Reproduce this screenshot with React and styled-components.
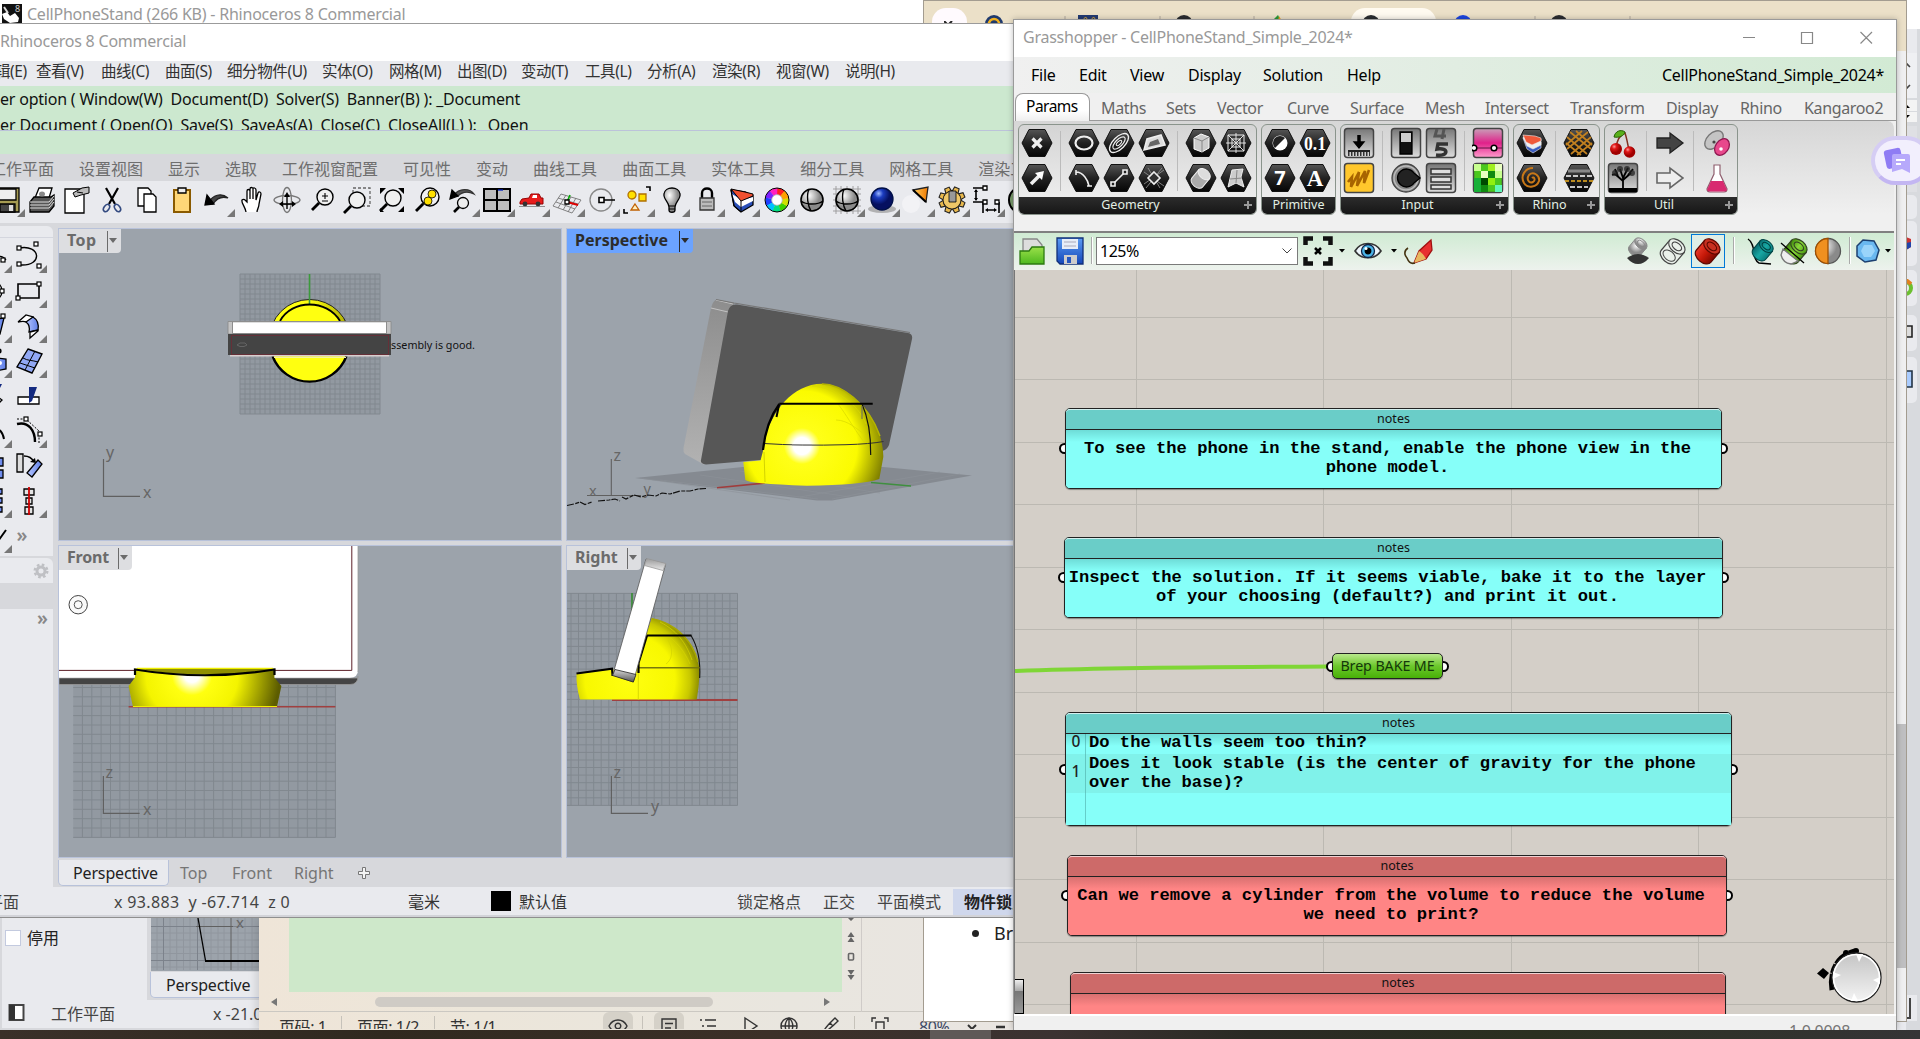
import React from "react";
import styled, { createGlobalStyle, css } from "styled-components";

const UI = `"Noto Sans", "Noto Sans CJK SC", sans-serif`;
const MONO = `"Courier New", "Liberation Mono", monospace`;

const Global = createGlobalStyle`
  html, body { margin: 0; padding: 0; }
  body { width: 1920px; height: 1039px; overflow: hidden; font-family: ${UI}; font-size: 15px; color: #222; }
  *, *::before, *::after { box-sizing: border-box; }
  svg { display: block; flex: none; }
  svg text { font-family: ${UI}; }
`;

const Desktop = styled.div`
  position: relative;
  width: 1920px;
  height: 1039px;
  overflow: hidden;
  background: #d7d8dc;
`;

const Win = styled.section`
  position: absolute;
  left: ${(p) => p.$x}px;
  top: ${(p) => p.$y}px;
  width: ${(p) => p.$w}px;
  height: ${(p) => p.$h}px;
  overflow: hidden;
  display: flex;
  flex-direction: column;
  background: ${(p) => p.$bg || "#e9eaee"};
`;

const Label = styled.span`
  display: block;
  flex: none;
  width: ${(p) => (p.$w ? p.$w + "px" : "auto")};
  font-size: ${(p) => p.$size || 16}px;
  font-weight: ${(p) => p.$weight || 400};
  letter-spacing: ${(p) => p.$ls || 0}px;
  color: ${(p) => p.$color || "#222"};
  line-height: 22px;
  white-space: pre;
`;

/* ---------- shared gradients ---------- */
const Lin = ({ id, a, b, c, h }) => (
  <linearGradient id={id} x1="0" y1="0" x2={h ? 1 : 0} y2={h ? 0 : 1}>
    <stop offset="0" stopColor={a} />
    {c && <stop offset=".5" stopColor={c} />}
    <stop offset="1" stopColor={b} />
  </linearGradient>
);
const HiddenDefs = styled.svg`position: absolute; width: 0; height: 0;`;
const Defs = () => (
  <HiddenDefs>
    <defs>
      <Lin id="hex" a="#555" c="#222" b="#050505" />
      <Lin id="btn" a="#777" c="#aaa" b="#ddd" />
      <Lin id="side" a="#8d8d8d" b="#b2b2b2" />
      <Lin id="cap" a="#9a9a9a" b="#e8e8e8" />
      <Lin id="capd" a="#d8d8d8" b="#555" />
      <Lin id="pink" a="#c8a0b8" c="#e0218a" b="#ff9ccc" />
      <Lin id="blueface" a="#b8c8ff" b="#5f7fe8" h />
      <Lin id="compass" a="#c4c4c4" b="#f4f4f4" />
      <Lin id="folder" a="#9ae04a" b="#4eb81e" />
      <Lin id="cyl" a="#e83828" c="#c41808" b="#7c0800" h />
      <Lin id="teal" a="#0a6c70" c="#18a8a4" b="#0a7c7c" h />
      <Lin id="green" a="#3f8a0a" c="#8ad83a" b="#4a9a10" h />
      <Lin id="cone" a="#ffd060" b="#f07800" h />
      <Lin id="floppy" a="#5a9cf4" b="#1447b8" />
      <radialGradient id="ball" cx=".35" cy=".3"><stop offset="0" stopColor="#fff" /><stop offset="1" stopColor="#8a8a8a" /></radialGradient>
      <radialGradient id="blue" cx=".35" cy=".25"><stop offset="0" stopColor="#9db8ff" /><stop offset=".4" stopColor="#1b3cc0" /><stop offset="1" stopColor="#051060" /></radialGradient>
      <radialGradient id="cherry" cx=".35" cy=".3"><stop offset="0" stopColor="#ff9a9a" /><stop offset=".4" stopColor="#e01818" /><stop offset="1" stopColor="#a00000" /></radialGradient>
      <radialGradient id="domeP" gradientUnits="userSpaceOnUse" cx="802" cy="446" r="95">
        <stop offset="0" stopColor="#fff" /><stop offset=".09" stopColor="#fff" /><stop offset=".19" stopColor="#ffff18" /><stop offset=".58" stopColor="#fbfb00" /><stop offset=".87" stopColor="#808000" />
      </radialGradient>
      <radialGradient id="domeF" gradientUnits="userSpaceOnUse" cx="192" cy="675" r="92">
        <stop offset="0" stopColor="#fff" /><stop offset=".08" stopColor="#fff" /><stop offset=".22" stopColor="#ffff10" /><stop offset=".5" stopColor="#f4f400" /><stop offset=".95" stopColor="#5c5c00" />
      </radialGradient>
      <radialGradient id="domeR" gradientUnits="userSpaceOnUse" cx="630" cy="680" r="75">
        <stop offset="0" stopColor="#ffff10" /><stop offset=".6" stopColor="#f8f800" /><stop offset=".8" stopColor="#c8c800" /><stop offset=".98" stopColor="#747400" />
      </radialGradient>
      <Lin id="topBall" a="#ffff10" c="#ffff10" b="#a8a800" h />
    </defs>
  </HiddenDefs>
);

const I = ({ s = 32, children }) => (
  <svg width={s} height={s} viewBox={`${-s / 2} ${-s / 2} ${s} ${s}`} fill="none" stroke="#000" strokeWidth="1.3">{children}</svg>
);

/* ---------- Rhino toolbar icons ---------- */
const Lens = ({ x = 3, y = -3, r = 8 }) => (
  <>
    <circle cx={x} cy={y} r={r} fill="#f0f0f0" strokeWidth="1.4" />
    <path d={`M${x - r * 0.75} ${y + r * 0.75}L${x - r - 5} ${y + r + 5}`} strokeWidth="2.8" />
  </>
);
const rhinoIcons = [
  <I key="0"><path d="M-13 -12H12V12H-10L-13 9Z" fill="#a59b52" /><path d="M-9 -11H9V0H-9Z" fill="#eee" /><path d="M-7 4H8V12H-7Z" fill="#444" /><path d="M2 5H6V11H2Z" fill="#ddd" stroke="none" /></I>,
  <I key="1"><path d="M-7 -2L-3 -12H10L7 -2Z" fill="#fff" /><path d="M-12 2L-8 -3H9L12 -5V6L7 12H-12Z" fill="#555" /><path d="M-12 2H7L12 -4M-12 5H7L12 -1M-12 8H7L12 2" stroke="#ddd" strokeWidth="1" /><ellipse cx="0" cy="-6" rx="3" ry="2.5" fill="#888" stroke="none" /></I>,
  <I key="2"><path d="M-12 -11H7V13H-12Z" fill="#fff" /><path d="M-4 -7L5 -12L12 -13V-7L4 -5L-2 -3Z" fill="#bbb" strokeWidth="1" /><path d="M0 -8L6 -7" strokeWidth="1" /></I>,
  <I key="3"><path d="M-6 -12L3 4M6 -12L-3 4" strokeWidth="2.2" /><ellipse cx="-5.5" cy="8" rx="2.5" ry="4" transform="rotate(35 -5.5 8)" stroke="#334a80" strokeWidth="1.6" /><ellipse cx="5.5" cy="8" rx="2.5" ry="4" transform="rotate(-35 5.5 8)" stroke="#334a80" strokeWidth="1.6" /></I>,
  <I key="4"><path d="M-9 -12H1L4 -9V6H-9Z" fill="#fff" /><path d="M-3 -6H6L9 -3V12H-3Z" fill="#fff" /></I>,
  <I key="5"><path d="M-8 -10H8V12H-8Z" fill="#ffd778" stroke="#8a5a00" strokeWidth="2" /><path d="M-4 -12H4V-7H-4Z" fill="#eee" /></I>,
  <I key="6"><path d="M-9 3C-4 -5 4 -8 11 -2C5 -4 0 -2 -4 4Z" fill="#444" stroke="#222" /><path d="M-12 5L-10 -5L-3 4Z" fill="#000" /></I>,
  <I key="7"><path d="M-6 12C-7 6 -11 3 -10 0C-8 -2 -6 1 -5 2V-9C-5 -11 -2 -11 -2 -9V-1V-11C-2 -13 1 -13 1 -11V-1V-11C1 -13 4 -12 4 -10V0L6 -7C7 -9 9 -8 9 -6L7 4C7 8 5 9 5 12" fill="#fff" /></I>,
  <I key="8"><ellipse rx="13" ry="4.5" stroke="#777" /><ellipse rx="4.5" ry="12.5" stroke="#777" /><path d="M0 -6V9M-5 4H6" strokeWidth="1.4" /><path d="M0 -8L-3 -3H3ZM-8 4L-4 1V7ZM9 4L5 1V7Z" fill="#000" stroke="none" /></I>,
  <I key="9"><Lens /><path d="M3 -7V-1M0 -4H6M0 1H6" strokeWidth="1.1" /></I>,
  <I key="10"><path d="M-4 -12H13V6H-4Z" strokeDasharray="3 2" stroke="#666" /><Lens x={0} y={0} /></I>,
  <I key="11"><Lens x={1} y={-2} /><path d="M-12 -12H-6L-12 -6ZM12 -12V-6L6 -12ZM12 12H6L12 6ZM-12 12V8L-8 12Z" fill="#000" stroke="none" /></I>,
  <I key="12"><Lens r={9} /><circle cx="5" cy="-6" r="4" fill="#ffe000" strokeWidth=".8" /><circle cx="1" cy="1" r="4" fill="#ffe000" strokeWidth=".8" /></I>,
  <I key="13"><path d="M-8 -5C-3 -12 8 -12 12 -6C6 -9 0 -8 -4 -4Z" fill="#555" stroke="#333" /><path d="M-12 -1L-10 -10L-4 -4Z" fill="#000" /><circle cx="1" cy="3" r="5.5" fill="#eee" /><path d="M-3 7L-8 12" strokeWidth="2.6" /></I>,
  <I key="14"><path d="M-13 -11H13V11H-13Z" fill="#bdbdbd" strokeWidth="2" /><path d="M0 -11V11M-13 0H13" strokeWidth="2" /><path d="M1 -10H6" stroke="#0020c0" /></I>,
  <I key="15"><path d="M-12 2L-10 -1L-3 -2L-1 -6H7L9 -2H11V4H-12Z" fill="#e81c1c" stroke="#900" strokeWidth="1" /><path d="M1 -5H5V-2H0Z" fill="#fff" stroke="none" /><circle cx="-7" cy="4" r="2.4" fill="#333" stroke="none" /><circle cx="6" cy="4" r="2.4" fill="#333" stroke="none" /><path d="M-13 6.5H13" stroke="#777" strokeWidth=".8" /></I>,
  <I key="16"><path d="M-6 -6L14 0L5 13L-14 6ZM-1 -5L-9 8M4 -3L-4 10M9 -2L1 12M-9 -2L11 4M-11 2L8 9" stroke="#777" strokeWidth=".9" /><path d="M0 2L3 -5" stroke="#0a0" strokeWidth="1.6" /><path d="M0 2L11 5" stroke="#d00" strokeWidth="2" /><path d="M-2 0H2V4H-2Z" fill="#fff" /></I>,
  <I key="17"><circle cx="-1" r="11" stroke="#888" /><path d="M-3 -2.5H2V2.5H-3ZM2 0H13" fill="#fff" strokeWidth="1.6" /></I>,
  <I key="18"><circle cx="-5" cy="-5" r="4" fill="#ffe000" stroke="#b07000" /><path d="M2 -6H9V1H2Z" fill="#ffe000" stroke="#b07000" /><path d="M-2 4L2 10H-6Z" fill="#fff0c0" stroke="#c06000" /><path d="M9 -13H13V-9M-13 9V13H-9" strokeWidth="1.6" /></I>,
  <I key="19"><path d="M-3 7C-3 2 -9 -1 -8 -6C-7 -14 7 -14 8 -6C9 -1 3 2 3 7V10C3 13 -3 13 -3 10Z" fill="url(#ball)" /><path d="M-3 6H3M-3 9H3" strokeWidth="1" /></I>,
  <I key="20"><path d="M-5 -2V-7C-5 -13 5 -13 5 -7V-2" strokeWidth="2.4" /><path d="M-7 -2H7V10H-7Z" fill="#bbb" stroke="#333" /><path d="M-5 2H5M-5 6H5" stroke="#666" strokeWidth="1" /></I>,
  <I key="21"><path d="M-11 -10L-8 6L-1 12L11 5V-4L3 -8Z" fill="#2a4fb8" /><path d="M-10 -6L-7 2L-1 7L11 1V-3L0 0Z" fill="#fff" stroke="none" /><path d="M-11 -11L-1 1L11 -4V-6L3 -8Z" fill="#f05030" strokeWidth="1" /><path d="M-11 -10L-8 6L-1 12V1" strokeWidth="1" /></I>,
  <I key="22"><g strokeWidth="6.5">{["#ff2020", "#ff20c0", "#8020ff", "#2040ff", "#00c0ff", "#00e080", "#40d000", "#d0e000", "#ffa000"].map((c, i) => (<path key={c} stroke={c} d="M0 -8.7A8.7 8.7 0 0 1 5.8 -6.5" transform={`rotate(${-i * 40})`} />))}</g><circle r="12" strokeWidth="1" /><circle r="5.3" fill="#fff" stroke="#999" strokeWidth=".6" /></I>,
  <I key="23"><circle r="11" fill="url(#ball)" strokeWidth="1.6" /><path d="M-11 1C-6 5 6 5 11 1M-3 -11C-6 -4 -4 6 -1 11" strokeWidth="1.4" /></I>,
  <I key="24"><path d="M-14 -11H14M-14 -6H14M-14 0H14M-14 6H14M-14 11H14M-11 -14V14M-6 -14V14M0 -14V14M6 -14V14M11 -14V14" stroke="#999" strokeWidth=".9" /><circle r="11" fill="url(#ball)" strokeWidth="1.6" /><path d="M-11 1C-6 5 6 5 11 1M-3 -11C-6 -4 -4 6 -1 11" strokeWidth="1.4" /></I>,
  <I key="25"><ellipse cx="0" cy="9" rx="14" ry="4" fill="#999" opacity=".7" stroke="none" /><circle cy="-1" r="11" fill="url(#blue)" stroke="#001048" /></I>,
  <I key="26"><circle cx="-6" cy="4" r="9" fill="#f2f2f5" stroke="none" /><path d="M-4 -10L11 -13L9 2Z" fill="url(#cone)" stroke="#222" /><path d="M-4 -10L9 2" strokeWidth="2" /></I>,
  <I key="27"><g fill="#e8b84c" stroke="#222" strokeWidth="1.1">{[22, 67, 112, 157, 202, 247, 292, 337].map((a) => (<path key={a} d="M-3.2 -7.5L-2.4 -13H2.4L3.2 -7.5" transform={`rotate(${a})`} />))}<circle r="9" /></g><circle r="8.2" fill="#f0c868" stroke="none" /><path d="M-3 -9H4V2H-3Z" fill="#999" strokeWidth=".8" /></I>,
  <I key="28"><path d="M-14 -12H-4M-14 2H-4M-11 -10V0M-4 2V13M12 2V13M0 10H8" strokeWidth="1.6" /><path d="M-4 -14H0V-10H-4ZM-4 0H0V4H-4ZM8 0H12V4H8Z" fill="#fff" /><path d="M-11 -11L-13 -8H-9ZM-11 1L-13 -2H-9ZM-2 10L1 8V12ZM10 10L7 8V12Z" fill="#000" stroke="none" /></I>,
  <I key="29"><circle r="13" fill="#7a9c6c" strokeWidth="2" /><path d="M-9 -4H2M-9 0H2" stroke="#dfe" strokeWidth="3" /></I>,
];
const cornerMarked = new Set([0, 6, 13, 14, 15, 16, 17, 18, 19, 20, 21, 22, 24, 25, 26, 27, 28]);

const Sq = ({ x, y }) => <rect x={x - 2} y={y - 2} width="4" height="4" fill="#fff" strokeWidth="1.2" />;
const sideIcons = [
  [<I key="a"><path d="M-12 8C0 8 4 -6 12 4" /><Sq x={9} y={4} /></I>, <I key="b"><path d="M-10 -8C12 -12 14 10 -8 9" strokeWidth="1.4" /><Sq x={-10} y={-8} /><Sq x={7} y={-12} /><Sq x={-10} y={8} /><Sq x={10} y={10} /></I>],
  [<I key="a"><circle cx="-2" r="10" /><Sq x={8} y={0} /></I>, <I key="b"><path d="M-11 -7H10V7H-11Z" strokeWidth="1.6" /><Sq x={10} y={-7} /><Sq x={-11} y={7} /></I>],
  [<I key="a"><path d="M-8 8L-2 -6L10 -8L6 8Z" fill="url(#blueface)" /><Sq x={9} y={-10} /></I>, <I key="b"><path d="M-11 -4L-3 -11L4 -9L0 -3C-3 -5 -7 -5 -11 -4Z" fill="#fff" /><path d="M4 -9C9 -6 10 -2 9 4L0 6C1 2 1 -1 -3 -4Z" fill="url(#blueface)" /><path d="M9 4V5L1 12V6Z" fill="#fff" /></I>],
  [<I key="a"><path d="M-8 -4L12 -2V8L-8 12Z" fill="url(#blueface)" /><circle cx="6" cy="2" r="2" fill="#fff" stroke="none" /><circle cx="5" cy="-10" r="2" fill="#000" /></I>, <I key="b"><path d="M-1 -12L13 -7L3 12L-12 6Z" fill="#91a8f5" strokeWidth="1.4" /><path d="M-6 -3C-1 0 3 -1 9 1M-9 2L6 7M6 -10L-4 9" strokeWidth="1" /></I>],
  [<I key="a"><path d="M0 -2L8 4L0 12" /><path d="M2 -12H8L4 -4Z" fill="#142a80" stroke="none" /></I>, <I key="b"><path d="M-11 1H10V8H-11Z" fill="#fff" /><path d="M0 -9H8L3 5L0 7Z" fill="#142a80" stroke="none" /></I>],
  [<I key="a"><path d="M-8 6C0 -8 8 -2 10 8" strokeWidth="2" /></I>, <I key="b"><path d="M-12 -7C0 -10 6 0 6 11" strokeWidth="2.4" /><path d="M-12 -12H-4M-2 -11L10 0M10 3V12" strokeDasharray="2 1.5" strokeWidth="1" /><Sq x={-3} y={-12} /><Sq x={11} y={3} /></I>],
  [<I key="a"><path d="M-2 -8H9V0H-2ZM0 4H9V12H0Z" fill="url(#blueface)" /></I>, <I key="b"><path d="M-12 -12H-6V6H-12Z" fill="#ddd" /><path d="M-5 -10C0 -10 3 -8 5 -4" /><path d="M7 -3L1 -4L6 -8Z" fill="#000" stroke="none" /><path d="M9 -6L13 -2L3 11L-2 7Z" fill="url(#blueface)" /></I>],
  [<I key="a"><path d="M0 -12H8V-7H0ZM0 -3H8V2H0ZM0 6H8V11H0Z" fill="#6f8cf0" /></I>, <I key="b"><path d="M-5 -12H5V-6H-5ZM-3 -3H3V3H-3ZM-4 6H4V13H-4Z" fill="#e4e4e4" /><path d="M0 -14V14" stroke="#d00000" strokeWidth="1.8" /></I>],
];

/* ---------- Rhino window pieces ---------- */
const Bar = styled.div`
  display: flex;
  flex: none;
  align-items: ${(p) => p.$align || "center"};
  height: ${(p) => p.$h}px;
  padding: ${(p) => p.$pt || 0}px 0 ${(p) => p.$pb || 0}px;
  background: ${(p) => p.$bg || "transparent"};
  overflow: hidden;
  white-space: pre;
`;
const RhinoFrame = styled(Win)`
  border-top: 1px solid #9b9b9b;
  border-bottom: 1px solid #8f8f8f;
`;
const Shift = styled.div`
  display: flex;
  gap: ${(p) => p.$gap || 0}px;
  margin-left: ${(p) => p.$x}px;
`;
const CommandLog = styled.div`
  height: 45px;
  flex: none;
  overflow: hidden;
  background: #cce8cf;
  border-bottom: 1px solid #bcc3da;
  padding-top: 2px;
`;
const CommandLine = styled.div`
  height: 26px;
  line-height: 22px;
  font-size: 16px;
  letter-spacing: ${(p) => p.$ls}px;
  white-space: pre;
  color: #111;
`;
const CommandInput = styled.div`height: 23px; flex: none; background: #cce8cf;`;
const Slot = styled.div`
  position: relative;
  width: 35px;
  height: 35px;
  flex: none;
  display: flex;
  align-items: center;
  justify-content: center;
  ${(p) => p.$mark && css`
    &::after {
      content: "";
      position: absolute;
      right: 0;
      bottom: 0;
      border-left: 8px solid transparent;
      border-bottom: 8px solid #777;
    }
  `}
`;
const Work = styled.div`display: flex; flex: none; height: 664px; background: #d7d8dc;`;
const SideColumn = styled.div`width: 58px; flex: none; padding: 3px 5px 0 0; display: flex; flex-direction: column; overflow: hidden;`;
const SideBlock = styled.div`
  height: ${(p) => p.$h}px;
  flex: none;
  overflow: hidden;
  margin-bottom: ${(p) => p.$mb || 0}px;
  background: ${(p) => p.$bg || "#e9eaee"};
  border-radius: 0 ${(p) => p.$r || 0}px 0 0;
`;
const SideGrip = styled.div`height: 12px; border-bottom: 1px solid #d4d6de;`;
const More = styled.div`
  padding: ${(p) => p.$pad};
  text-align: right;
  color: #888;
  font-size: 19px;
  line-height: 18px;
  font-weight: 600;
`;
const GearRow = styled.div`display: flex; justify-content: flex-end; align-items: center; height: 100%; padding-right: 3px;`;
const ViewArea = styled.div`flex: 1; min-width: 0; padding-top: 5px; display: flex; flex-direction: column;`;
const ViewGrid = styled.div`
  display: grid;
  grid-template: 313px 313px / 504px 448px;
  gap: 4px;
  flex: none;
`;
const View = styled.div`
  position: relative;
  border: 1px solid #b8c2da;
  background: #9ca3ab;
  overflow: hidden;
`;
const ViewTag = styled.div`
  position: absolute;
  left: 0;
  top: 0;
  height: 24px;
  width: ${(p) => p.$w}px;
  padding: 0 0 0 8px;
  background: ${(p) => (p.$active ? "#6ba3ff" : "#dddee1")};
  color: ${(p) => (p.$active ? "#2c2c2c" : "#6b6b6b")};
  border-bottom-right-radius: 4px;
  font-weight: 700;
  font-size: 16px;
  line-height: 22px;
  letter-spacing: ${(p) => p.$ls || 0}px;
`;
const TagArrow = styled.i`
  position: absolute;
  right: 0;
  top: 2px;
  width: 14px;
  height: 21px;
  border-left: 1px solid currentColor;
  &::after {
    content: "";
    position: absolute;
    left: 1px;
    top: 7px;
    border: 4.5px solid transparent;
    border-top: 5px solid currentColor;
    border-bottom: 0;
  }
`;
const ViewTabs = styled.div`height: 29px; display: flex; align-items: flex-start; padding-top: 2px;`;
const ViewTab = styled.div`
  width: ${(p) => p.$w}px;
  height: 26px;
  padding-left: ${(p) => p.$pl || 0}px;
  line-height: 26px;
  font-size: 16px;
  letter-spacing: ${(p) => p.$ls || 0}px;
  color: ${(p) => (p.$on ? "#222" : "#757575")};
  white-space: nowrap;
  ${(p) => p.$on && css`
    background: #e9eaee;
    border: 1px solid #b8c2da;
    border-top: 0;
    border-radius: 0 0 5px 5px;
  `}
`;
const StatusBar = styled.div`
  height: 30px;
  flex: none;
  display: flex;
  align-items: center;
  padding-top: 2px;
  background: #e9eaee;
  border-bottom: 2px solid #d2d3d8;
  overflow: hidden;
`;
const Swatch = styled.i`width: 20px; height: 20px; margin: 0 8px 2px 0; background: #000; flex: none;`;
const SnapOn = styled.div`
  width: 80px;
  height: 26px;
  flex: none;
  padding-left: 11px;
  background: #cfd7ec;
  font-size: 16px;
  font-weight: 700;
  line-height: 26px;
  white-space: nowrap;
`;

const Grid = ({ x, y, w, h, step }) => {
  const lines = [];
  for (let i = x + w; i >= x - 0.01; i -= step) lines.push(`M${i.toFixed(1)} ${y}V${y + h}`);
  for (let j = y + h; j >= y - 0.01; j -= step) lines.push(`M${x} ${j.toFixed(1)}H${x + w}`);
  return (
    <>
      <rect x={x} y={y} width={w} height={h} fill="#9299a1" />
      <path d={lines.join("")} stroke="#81888f" strokeWidth="1" fill="none" />
    </>
  );
};
const Axis = ({ x, y, up, right, a, b, ax, ay, bx, by }) => (
  <>
    <path d={`M${x} ${up}V${y}H${right}`} stroke="#606060" fill="none" strokeWidth="1.2" />
    <text x={ax} y={ay} fontSize="16" fill="#666">{a}</text>
    <text x={bx} y={by} fontSize="16" fill="#666">{b}</text>
  </>
);

const TopScene = () => (
  <svg width="502" height="311" viewBox="59 229 502 311" fill="none">
    <Grid x={240} y={274} w={140} h={140} step={5} />
    <circle cx="309.7" cy="340" r="40.5" fill="url(#topBall)" stroke="#222" strokeWidth="1" />
    <path d="M309.5 274V304" stroke="#3c9a3c" strokeWidth="1.6" />
    <path d="M280 321C292 299 327 299 340 321" fill="#ffff10" stroke="#000" strokeWidth="1.8" />
    <path d="M272.5 356A39.5 39.5 0 0 0 346.5 356" fill="#ffff10" stroke="#000" strokeWidth="2.4" />
    <path d="M274 357.5H346" stroke="#f4f49a" />
    <path d="M228 321.5H391V334H228Z" fill="#c4c4c4" stroke="#888" strokeWidth=".8" />
    <path d="M232.5 321.8H386.5V333.5H232.5Z" fill="#fff" stroke="#777" strokeWidth=".8" />
    <path d="M230 355.5H389" stroke="#d8cfcf" strokeWidth="2" />
    <path d="M228 334H391V355H228Z" fill="#444" />
    <path d="M231.5 335.5H388.5V354.5H231.5Z" stroke="#7c2430" strokeWidth=".6" />
    <path d="M237 345L240 343H245L247 345L244 346.5H240Z" stroke="#6c6c6c" strokeWidth=".8" />
    <text x="391" y="349" fontSize="11.5" fill="#111" textLength="84" lengthAdjust="spacingAndGlyphs">ssembly is good.</text>
    <Axis x={103.5} y={496.3} up={459} right={140} a="y" b="x" ax={106} ay={458} bx={143} by={497.5} />
  </svg>
);
const PerspectiveScene = () => (
  <svg width="447" height="311" viewBox="567 229 447 311" fill="none">
    <path d="M635 478L743 467H883L972 475.5L832 500.5H817Z" fill="#858a91" />
    <path d="M660 480L818 499M700 475L850 497M740 471L880 493M790 500L640 478M832 499L960 474M800 497L940 472" stroke="#8d9299" strokeWidth=".6" />
    <path d="M711 308Q713 300 717 299.5L734 303L704 464.5L701 463L685 454Q683 452 683.5 448Z" fill="url(#side)" />
    <path d="M711 308L728 312M716 300L733 304" stroke="#cfcfcf" strokeWidth=".8" />
    <path d="M716 299.5L734 303L910 332.5" stroke="#777" strokeWidth="1.2" />
    <path d="M728 311Q730 303.5 737 304.5L908 333Q913 334 912 339L889 445Q887 450 882 451L760 460L706 464.5Q700 464 701 460Z" fill="#575757" />
    <path d="M717 487.8L765 483" stroke="#a03c3c" strokeWidth="1.6" />
    <path d="M871 482.5L911 486" stroke="#3f8f3f" strokeWidth="1.6" />
    <path d="M743.3 462L745.3 480Q750 484 806.7 485.7Q862 485 879.3 479L883.3 457C884 420 850 384 822 383.7C792 384 772 412 765 438L763 451L760.5 460.5Z" fill="url(#domeP)" />
    <path d="M822 384C840 384 868 402 880 436" stroke="#b4b400" strokeWidth="1.5" />
    <path d="M812 386C836 388 858 404 866 424M838 404C846 414 852 426 864 442M836 420C848 420 858 430 864 434" stroke="#d8d800" opacity=".7" />
    <path d="M764 443.5Q800 446 846 444.7Q870 444 883.5 441.5" stroke="#333" />
    <path d="M792 444.900H812" stroke="#999" />
    <path d="M779.3 403.8H872.7" stroke="#000" strokeWidth="2" />
    <path d="M779.3 404Q766 422 763 450" stroke="#000" strokeWidth="2.2" />
    <path d="M779 405L776.5 417" stroke="#000" strokeWidth="2" />
    <path d="M862 404Q871 424 870.7 455" stroke="#111" strokeWidth="1.2" />
    <path d="M862 406V419" stroke="#666" />
    <path d="M764 452L765 482" stroke="#c8c800" strokeWidth=".8" />
    <path d="M611.3 459V496M587 495.5H641" stroke="#606060" strokeWidth="1.1" />
    <text x="613.5" y="460.5" fontSize="16" fill="#666">z</text>
    <text x="589" y="496" fontSize="14.5" fill="#666">x</text>
    <text x="643.5" y="493.5" fontSize="14.5" fill="#666">y</text>
    <path d="M567 505.5L574 504L580 502L585 504.5L592 502M598 501L609 500L615 499L620 501M622 497L626 499L634 495L641 497L648 495L656 496L662 493L670 494L680 491L690 491L698 489L706 488.5" stroke="#111" strokeWidth="1.2" strokeDasharray="7 1.5 4 1" />
  </svg>
);
const FrontScene = () => (
  <svg width="502" height="311" viewBox="59 546 502 311" fill="none">
    <Grid x={73.2} y={678} w={262.2} h={159.4} step={9.37} />
    <path d="M59 678H358V676Q358 684.5 350 684.5H59Z" fill="#444" stroke="#999" strokeWidth=".8" />
    <path d="M59 546H358V670Q358 677.8 350 677.8H59Z" fill="#fff" />
    <path d="M358 546V672" stroke="#999" strokeWidth=".8" />
    <path d="M59 670.4H351.8V546" stroke="#5c2028" />
    <circle cx="78.2" cy="604.7" r="9.2" fill="#fafafa" stroke="#444" /><circle cx="78.2" cy="604.7" r="4" stroke="#555" />
    <path d="M128.6 706.8H335.4" stroke="#a04040" strokeWidth="1.6" />
    <path d="M135 668.5H275L274.3 677.5L281.4 686L277 706.7H132.9L128.6 686L135 677.5Z" fill="url(#domeF)" />
    <path d="M137 668.5H273Q205 681 137 668.5Z" fill="#8f8f00" />
    <path d="M137 668.3H273M133 706.5H277" stroke="#f0f000" strokeWidth="1.2" />
    <path d="M135 675V669.5Q205 681 274.5 669.5V675" stroke="#000" strokeWidth="2.2" />
    <Axis x={103.4} y={813.4} up={776} right={139.6} a="z" b="x" ax={105.5} ay={777.5} bx={143} by={814.5} />
  </svg>
);
const RightScene = () => (
  <svg width="447" height="311" viewBox="567 546 447 311" fill="none">
    <Grid x={563} y={593.4} w={174.5} h={212} step={7.57} />
    <path d="M632 593V630" stroke="#3f8f3f" strokeWidth="1.8" />
    <path d="M612 700H737.5" stroke="#a04040" strokeWidth="1.8" />
    <path d="M651.7 618.3Q678 624 691.7 646.7Q700 660 699.5 674Q699 688 696.7 699.5H580Q576 686 576.5 674L612.7 669L620 676L640 650Z" fill="url(#domeR)" />
    <path d="M651.7 618.8Q678 624 691.7 646.7Q696 654 698 662" stroke="#a8a800" strokeWidth="1.6" />
    <path d="M660 622C680 632 688 648 692 660M654 630C672 634 684 650 690 664M668 640C674 650 672 660 666 664" stroke="#d4d400" opacity=".7" />
    <path d="M576.5 673.5L612 668.7L612.5 676" stroke="#000" strokeWidth="2" />
    <path d="M646.5 635.5H691.5" stroke="#000" strokeWidth="2" />
    <path d="M691 635.5Q701 652 699.7 678" stroke="#111" strokeWidth="1.1" />
    <path d="M638 667.8H699.7" stroke="#77770c" strokeWidth="1.6" />
    <path d="M638.3 673V700" stroke="#d0d000" strokeWidth=".8" />
    <path d="M647 635.5L638.5 663V673" stroke="#000" strokeWidth="2.2" />
    <path d="M646 559L665.7 564L633.3 682L612.7 675Z" fill="#fff" stroke="#555" strokeWidth=".8" />
    <path d="M647 558.5L665.8 563.5L663 570.5L644.5 565.5Z" fill="url(#cap)" stroke="#999" strokeWidth=".8" />
    <path d="M615 669.5L636 674.5L633.3 682L612.5 675.5Z" fill="url(#capd)" stroke="#222" strokeWidth=".8" />
    <Axis x={611.4} y={813.4} up={776} right={648} a="z" b="y" ax={613.5} ay={777.5} bx={651} by={812} />
  </svg>
);

const menuItems = [["辑(E)", 41], ["查看(V)", 65], ["曲线(C)", 64], ["曲面(S)", 62], ["细分物件(U)", 95], ["实体(O)", 67], ["网格(M)", 68], ["出图(D)", 64], ["变动(T)", 64], ["工具(L)", 62], ["分析(A)", 65], ["渲染(R)", 64], ["视窗(W)", 69], ["说明(H)", 60]];
const rhinoTabs = ["工作平面", "设置视图", "显示", "选取", "工作视窗配置", "可见性", "变动", "曲线工具", "曲面工具", "实体工具", "细分工具", "网格工具", "渲染工具"];

const RhinoWindow = () => (
  <RhinoFrame $x={0} $y={23} $w={1014} $h={895}>
    <Bar $h={37} $pb={3} $bg="#fff"><Label $color="#999" $ls={-0.22}>Rhinoceros 8 Commercial</Label></Bar>
    <Bar $h={25} $pb={5} $bg="#e9eaee">
      <Shift $x={-5}>{menuItems.map(([t, w]) => <Label key={t} $w={w} $size={15.5} $color="#333" $ls={-0.4}>{t}</Label>)}</Shift>
    </Bar>
    <CommandLog>
      <CommandLine $ls={-0.21}>{"er option ( Window(W)  Document(D)  Solver(S)  Banner(B) ): _Document"}</CommandLine>
      <CommandLine $ls={-0.12}>{"er Document ( Open(O)  Save(S)  SaveAs(A)  Close(C)  CloseAll(L) ): _Open"}</CommandLine>
    </CommandLog>
    <CommandInput />
    <Bar $h={27} $pt={3} $bg="#d7d8dc">
      <Shift $x={-10} $gap={25}>{rhinoTabs.map((t) => <Label key={t} $color="#6e6e6e">{t}</Label>)}</Shift>
    </Bar>
    <Bar $h={42} $align="flex-start" $pt={1} $bg="#e9eaee">
      <Shift $x={-10.5}>{rhinoIcons.map((ic, i) => <Slot key={i} $mark={cornerMarked.has(i)}>{ic}</Slot>)}</Shift>
    </Bar>
    <Work>
      <SideColumn>
        <SideBlock $h={330} $mb={2} $r={6}>
          <SideGrip />
          {sideIcons.map((row, i) => (
            <Shift key={i} $x={-23.5}>
              <Slot $mark={i !== 4 && i !== 6}>{row[0]}</Slot>
              <Slot $mark={i !== 4 && i !== 6}>{row[1]}</Slot>
            </Shift>
          ))}
          <Shift $x={-23.5}>
            <Slot $mark><I><path d="M-2 4L2 8L12 -6" strokeWidth="2" /></I></Slot>
            <More $pad="8px 0 0 5px">»</More>
          </Shift>
        </SideBlock>
        <SideBlock $h={25} $r={6}>
          <GearRow>
            <svg width="18" height="18" viewBox="-9 -9 18 18" fill="none" stroke="#bfc0c4"><circle r="4" strokeWidth="3" /><circle r="6.3" strokeWidth="2.4" strokeDasharray="2.6 2.35" /></svg>
          </GearRow>
        </SideBlock>
        <SideBlock $h={26} $bg="#d7d8dc" />
        <SideBlock $h={278}><More $pad="0 5px 0 0">»</More></SideBlock>
      </SideColumn>
      <ViewArea>
        <ViewGrid>
          <View><TopScene /><ViewTag $w={62} $ls={0.4}>Top<TagArrow /></ViewTag></View>
          <View><PerspectiveScene /><ViewTag $w={126} $active $ls={0}>Perspective<TagArrow /></ViewTag></View>
          <View><FrontScene /><ViewTag $w={73} $ls={-0.2}>Front<TagArrow /></ViewTag></View>
          <View><RightScene /><ViewTag $w={74}>Right<TagArrow /></ViewTag></View>
        </ViewGrid>
        <ViewTabs>
          <ViewTab $w={111} $pl={14} $ls={-0.15} $on>Perspective</ViewTab>
          <ViewTab $w={63} $pl={11}>Top</ViewTab>
          <ViewTab $w={62}>Front</ViewTab>
          <ViewTab $w={63}>Right</ViewTab>
          <svg width="14" height="26" viewBox="-7 -13 14 26"><path d="M-1.5 -5.500H1.5V-1.5H5.500V1.5H1.5V5.500H-1.5V1.5H-5.500V-1.5H-1.5Z" fill="#f4f4f4" stroke="#777" /></svg>
        </ViewTabs>
      </ViewArea>
    </Work>
    <StatusBar>
      <Shift $x={-45}><Label $w={159} $color="#444">工作平面</Label></Shift>
      <Label $w={294} $ls={0.35} $color="#444">{"x 93.883  y -67.714  z 0"}</Label>
      <Label $w={83} $color="#333">毫米</Label>
      <Swatch />
      <Label $w={218} $color="#333">默认值</Label>
      <Label $w={86} $color="#444">锁定格点</Label>
      <Label $w={54} $color="#444">正交</Label>
      <Label $w={76} $color="#444">平面模式</Label>
      <SnapOn>物件锁点</SnapOn>
    </StatusBar>
  </RhinoFrame>
);

/* ---------- background Rhino window ---------- */
const BackTitle = styled(Bar)`height: 29px; padding: 0 0 1px 2px; background: #fff; gap: 1px;`;
const BackFill = styled.div`flex: 1; display: flex; justify-content: space-between; align-items: flex-end;`;
const BackLeft = styled.div`width: 259px; height: 112px; display: flex; flex-direction: column; border-left: 2px solid #d7d8dc; border-bottom: 2px solid #d7d8dc; overflow: hidden;`;
const BackRow = styled.div`display: flex; height: ${(p) => p.$h}px; flex: none; align-items: ${(p) => p.$align || "center"};`;
const BackPanel = styled.div`width: 147px; height: 82px; padding: 9px 0 0 3px; display: flex; align-items: flex-start; gap: 6px;`;
const Check = styled.i`width: 16px; height: 16px; margin-top: 3px; background: #fff; border: 1px solid #c3cadf; flex: none;`;
const MiniView = styled.div`width: 112px; height: 82px; background: #d7d8dc; padding-left: 4px; flex: none;`;
const MiniTabs = styled.div`padding-top: 1px; margin-left: -1px;`;
const BackEdge = styled.div`width: 14px; align-self: stretch; background: #d8dade; display: flex; flex-direction: column;`;
const EdgePiece = styled.div`
  height: ${(p) => p.$h}px;
  margin: ${(p) => p.$mt || 0}px 3px 0 0;
  background: ${(p) => p.$bg || "#e9eaee"};
  border-radius: 0 ${(p) => p.$r || 0}px ${(p) => p.$r || 0}px 0;
  display: flex;
  align-items: center;
  overflow: hidden;
  flex: none;
`;

const BackRhino = () => (
  <Win $x={0} $y={0} $w={1920} $h={1030}>
    <BackTitle>
      <svg width="20" height="20" viewBox="0 0 20 20"><rect width="20" height="20" fill="#111" /><path d="M0 10L5 8L8 12L13 9L17 14L16 18L8 19L2 15Z" fill="#fff" /><path d="M2 3L6 9" stroke="#ddd" strokeWidth="2" /><text x="13" y="8" fontSize="9" fill="#ccc">8</text></svg>
      <Label $color="#999" $ls={-0.22}>{" CellPhoneStand (266 KB) - Rhinoceros 8 Commercial"}</Label>
    </BackTitle>
    <BackFill>
      <BackLeft>
        <BackRow $h={82} $align="flex-start">
          <BackPanel><Check /><Label>停用</Label></BackPanel>
          <MiniView>
            <svg width="108" height="53" viewBox="153 918 108 53" fill="none">
              <rect x="153" y="918" width="108" height="53" fill="#9ca3ab" />
              <path d="M159 918V970M172 918V970M178.700 918V970M185.500 918V970M192 918V970M206 918V970M213 918V970M220 918V970M226 918V970M240 918V970M247 918V970M254 918V970M153 933H261M153 940H261M153 947H261M153 953.500H261M153 967H261" stroke="#90969e" />
              <path d="M165.500 918V970M199.500 918V970M153 926.500H261M153 960.500H261" stroke="#7c828b" />
              <path d="M233 918V970M198 926.500H235" stroke="#606060" />
              <path d="M200 918L207.500 960.500" stroke="#000" strokeWidth="1.3" /><path d="M207 961H261" stroke="#000" strokeWidth="2" />
              <text x="238" y="928" fontSize="15" fill="#666">x</text>
            </svg>
            <MiniTabs><ViewTab $w={120} $pl={15} $ls={-0.2} $on>Perspective</ViewTab></MiniTabs>
          </MiniView>
        </BackRow>
        <BackRow $h={28}>
          <svg width="49" height="26" viewBox="2 1004 49 26"><rect x="9.500" y="1008" width="14" height="15" fill="#fff" stroke="#444" strokeWidth="2" /><rect x="9" y="1008" width="6" height="15" fill="#333" /></svg>
          <Label $w={162} $color="#444">工作平面</Label>
          <Label $color="#444">x -21.077</Label>
        </BackRow>
      </BackLeft>
      <BackEdge>
        <EdgePiece $h={24} /><EdgePiece $h={45} $bg="#eff0f3">
          <svg width="10" height="45" viewBox="0 0 10 45" fill="none" stroke="#444" strokeWidth="1.6"><path d="M-2 8L4 14M-2 38L4 32" /></svg>
        </EdgePiece>
        <EdgePiece $h={11} $mt={2} $bg="#f4f4f4"><svg width="8" height="8"><path d="M0 2L4 6H-4Z" /></svg></EdgePiece>
        <EdgePiece $h={10} $mt={1} $bg="#f4f4f4"><svg width="8" height="8"><path d="M0 6L4 2H-4Z" /></svg></EdgePiece>
        <EdgePiece $h={66} $mt={4} $bg="#dfe0e4" /><EdgePiece $h={24} $mt={3} $r={5} />
        <EdgePiece $h={45} $mt={2} $r={5}><svg width="8" height="14"><path d="M0 0L5 2V10L0 13Z" fill="#c33" /><path d="M0 6L5 5V10L0 13Z" fill="#24a" /></svg></EdgePiece>
        <EdgePiece $h={36} $mt={4} $r={5}><svg width="9" height="18"><circle cx="-1" cy="9" r="6" fill="none" stroke="#6cc030" strokeWidth="4" /><path d="M0 1L5 5" stroke="#e08020" strokeWidth="4" /></svg></EdgePiece>
        <EdgePiece $h={36} $mt={9} $r={5}><svg width="9" height="16"><path d="M-1 1H6V12H-1" fill="#ddd" stroke="#222" strokeWidth="1.6" /></svg></EdgePiece>
        <EdgePiece $h={46} $mt={6} $r={5}><svg width="9" height="20"><path d="M-1 1H6V17H-1" fill="#acf" stroke="#234" strokeWidth="1.6" /></svg></EdgePiece>
        <EdgePiece $h={110} $mt={356} $bg="#d8dade" />
        <EdgePiece $h={26} $mt={126} $bg="#e9eaee"><svg width="9" height="24"><path d="M0 22H4V2" fill="none" stroke="#444" strokeWidth="2" /></svg></EdgePiece>
      </BackEdge>
    </BackFill>
  </Win>
);

/* ---------- word processor window ---------- */
const DocWin = styled(Win)`background: linear-gradient(90deg, #efe5d8, #ece6da 30%, #e9e6df 70%, #e9e5e1); box-shadow: -3px 0 8px rgba(0, 0, 0, .12);`;
const DocTop = styled.div`display: flex; height: 94px; flex: none; border-bottom: 1px solid #cbc8c2;`;
const DocMain = styled.div`width: 603px; height: 94px; border-right: 1px solid #cfcbc8; display: grid; grid-template: 74px 20px / 30px 553px 20px;`;
const Page = styled.div`background: #cee8ca; grid-column: 2;`;
const HScroll = styled.div`grid-column: 1 / 4; display: flex; align-items: center; padding-left: 12px;`;
const HThumb = styled.i`width: 338px; height: 10px; margin: 0 111px 0 96px; border-radius: 5px; background: #cfcbc5;`;
const DocStatus = styled.div`display: flex; align-items: flex-start; height: 17px; overflow: hidden; padding-left: 20px;`;
const DocItem = styled.div`
  width: ${(p) => p.$w}px;
  flex: none;
  height: 30px;
  padding-top: 3px;
  font-size: 16px;
  line-height: 24px;
  letter-spacing: -0.4px;
  color: ${(p) => p.$c || "#333"};
  white-space: nowrap;
`;
const DocSep = styled.i`width: 1px; height: 14px; margin: 4px ${(p) => p.$mr}px 0 0; background: #c6c2ba; flex: none;`;
const DocBtn = styled.div`
  width: 30px;
  height: 30px;
  flex: none;
  margin-right: ${(p) => p.$mr}px;
  border-radius: 6px;
  background: ${(p) => (p.$on ? "#d5d1c8" : "transparent")};
  display: flex;
  justify-content: center;
  padding-top: 3px;
`;
const D = ({ d, children }) => <svg width="22" height="22" viewBox="-11 -11 22 22" fill="none" stroke="#333" strokeWidth="1.4">{d && <path d={d} />}{children}</svg>;
const DocWindow = () => (
  <DocWin $x={259} $y={918} $w={754} $h={112}>
    <DocTop>
      <DocMain>
        <Page />
        <svg width="20" height="74" viewBox="0 0 20 74" fill="#666"><path d="M6 0H12L9 3ZM9 14L5.500 19H12.500ZM9 19L5.500 24H12.500ZM9 62L5.500 57H12.500ZM9 57L5.500 52H12.500Z" /><rect x="6.500" y="35.500" width="5" height="6.500" rx="1" fill="none" stroke="#666" strokeWidth="1.6" /></svg>
        <HScroll>
          <svg width="8" height="8"><path d="M6 0V8L0 4Z" fill="#777" /></svg>
          <HThumb />
          <svg width="8" height="8"><path d="M0 0V8L6 4Z" fill="#777" /></svg>
        </HScroll>
      </DocMain>
    </DocTop>
    <DocStatus>
      <DocItem $w={62}>页码: 1</DocItem><DocSep $mr={15} />
      <DocItem $w={77}>页面: 1/2</DocItem><DocSep $mr={15} />
      <DocItem $w={153}>节: 1/1</DocItem>
      <DocBtn $on $mr={9}><D d="M-9 0C-5 -8 5 -8 9 0C5 8 -5 8 -9 0Z"><circle r="2.800" /></D></DocBtn>
      <DocSep $mr={11} />
      <DocBtn $on $mr={9}><D d="M-7 -7H7V8H-7ZM-4 -2.500H4M-4 2H2" /></DocBtn>
      <DocBtn $mr={12}><D d="M-8 -6H-6M-3 -6H8M-6 0H-4M-1 0H8M-8 6H-6M-3 6H8" /></DocBtn>
      <DocBtn $mr={9}><D d="M-5 -8L7 0L-5 8Z" /></DocBtn>
      <DocBtn $mr={11}><D d="M-8 0H8M0 -8V8M0 -8C-5 -4 -5 4 0 8M0 -8C5 -4 5 4 0 8"><circle r="8" /></D></DocBtn>
      <DocBtn $mr={9}><D d="M-7 7C-6 2 0 -3 5 -8L8 -5C3 0 -1 4 -7 7ZM0 -3L3 0" /></DocBtn>
      <DocSep $mr={10} />
      <DocBtn $mr={24}><D d="M-8 -4V-8H-4M4 -8H8V-4M8 4V8H4M-4 8H-8V4M-4 -4H4V5H-4Z" /></DocBtn>
      <DocItem $w={42} $c="#3c4a66">80%</DocItem>
      <D><path d="M-4 2L0 6L4 2" strokeWidth="2" /></D><D><path d="M2 4H11" strokeWidth="2.500" /></D>
    </DocStatus>
  </DocWin>
);

/* ---------- browser window ---------- */
const BrowserWin = styled(Win)`border: 1px solid #a39c90; background: #fff;`;
const TabStrip = styled.div`height: 50px; flex: none; background: #ebe0c8; display: flex; padding: 7px 0 0 8px;`;
const BTab = styled.div`
  width: ${(p) => p.$w}px;
  height: 43px;
  flex: none;
  padding: ${(p) => p.$pt || 7}px 0 0 ${(p) => p.$pl || 0}px;
  margin-right: ${(p) => p.$mr || 0}px;
  border-radius: 14px 14px 0 0;
  background: ${(p) => p.$bg || "transparent"};
`;
const BSep = styled.i`width: 2px; height: 20px; margin-top: 8px; background: #cfc5b4; flex: none;`;
const BPage = styled.div`flex: 1; display: flex; justify-content: space-between;`;
const Bullet = styled.div`margin: 868px 0 0 48px; display: flex; gap: 15px; align-items: center; font-size: 18px; line-height: 28px; color: #222; white-space: nowrap; height: 28px;`;
const Dot = styled.i`width: 7px; height: 7px; border-radius: 50%; background: #222;`;
const BScroll = styled.div`width: 11px; background: #f0f0f1; padding-top: 673px;`;
const BThumb = styled.div`height: 244px; margin-left: 1px; background: #bfbfc1;`;
const Circle = ({ f }) => <svg width="18" height="18"><circle cx="9" cy="9" r="9" fill={f} /></svg>;
const BrowserWindow = () => (
  <BrowserWin $x={923} $y={0} $w={984} $h={1022}>
    <TabStrip>
      <BTab $w={35} $mr={18} $bg="#fffafe" $pl={12} $pt={13}><svg width="12" height="6" fill="none" stroke="#222" strokeWidth="2"><path d="M0 0L4 4L8 0" /></svg></BTab>
      <BTab $w={79}><svg width="18" height="18"><circle cx="9" cy="9" r="9" fill="#1f3a6e" /><circle cx="9" cy="9" r="5" fill="none" stroke="#f0b020" strokeWidth="2.500" /></svg></BTab>
      <BSep />
      <BTab $w={93} $pl={12}><svg width="20" height="18"><path d="M0 0H20V18H0Z" fill="#233a72" /><path d="M4 6Q8 0 9 4M12 6Q16 0 17 4" stroke="#d8a840" fill="none" /></svg></BTab>
      <BSep />
      <BTab $w={92} $pl={14}><Circle f="#2a2c30" /></BTab>
      <BSep />
      <BTab $w={96} $pl={17}><svg width="14" height="18"><path d="M0 6L6 0L9 6Z" fill="#2a9a3a" /><path d="M7 1L10 6H6Z" fill="#f0a020" /></svg></BTab>
      <BTab $w={85} $mr={18} $pl={11} $bg="#fffaf0"><Circle f="#2a2c30" /></BTab>
      <BTab $w={80}><Circle f="#1c45e0" /></BTab>
      <BSep />
      <BTab $w={93} $pl={14}><Circle f="#2a2c30" /></BTab>
      <BSep />
    </TabStrip>
    <BPage>
      <Bullet><Dot />Brep</Bullet>
      <BScroll><BThumb /></BScroll>
    </BPage>
  </BrowserWin>
);

/* ---------- Grasshopper icons ---------- */
const Hex = ({ children }) => (
  <I><path d="M-15 0L-8 -13.500H8L15 0L8 13.500H-8Z" fill="url(#hex)" stroke="#111" strokeWidth="1" /><g stroke="#eee" strokeWidth="1.600">{children}</g></I>
);
const Tile = ({ f = "url(#btn)", children }) => (
  <I><rect x="-14.500" y="-14.500" width="29" height="29" rx="3" fill={f} stroke="#444" strokeWidth="1.500" />{children}</I>
);
const num = { fontWeight: 700, fill: "#fff", stroke: "none", textAnchor: "middle" };
const serif = { fontFamily: '"Liberation Serif", serif' };
const groups = [
  {
    name: "Geometry", w: 239, plus: true, cols: [
      [<Hex key="1"><path d="M-4.500 -4.500L4.500 4.500M4.500 -4.500L-4.500 4.500" strokeWidth="3.200" /></Hex>, <Hex key="2"><path d="M-6 6L2 -2" strokeWidth="3.500" /><path d="M7 -7L-2 -5L5 2Z" fill="#fff" stroke="none" /></Hex>],
      null,
      [<Hex key="1"><ellipse rx="8.500" ry="6.500" strokeWidth="2.200" /></Hex>, <Hex key="2"><path d="M-8 -6C-1 -6 4 2 5 8M-8 -8V-3M3 8H8" /></Hex>],
      [<Hex key="1"><g transform="rotate(-45)"><ellipse rx="12" ry="6" strokeWidth="1.300" /><ellipse rx="8" ry="3.500" strokeWidth="1.200" /><ellipse rx="3.500" ry="1.500" strokeWidth="1" /></g></Hex>, <Hex key="2"><path d="M-6 6L6 -6" /><path d="M-8 4H-4V8H-8ZM4 -8H8V-4H4Z" fill="#222" /></Hex>],
      [<Hex key="1"><path d="M-10 7L-7 -4L7 -8L11 2Z" fill="#ddd" /><path d="M-6 4L-4 -1L4 -4L6 1Z" fill="#666" stroke="none" /></Hex>, <Hex key="2"><path d="M-10 -6L10 8M-10 6L10 -8M-6 -10L6 10M8 -10L-8 10" stroke="#999" strokeWidth=".8" /><path d="M0 -6L6 0L0 6L-6 0Z" fill="#333" /></Hex>],
      null,
      [<Hex key="1"><path d="M-7 -5L0 -9L8 -6V5L1 9L-7 6Z" fill="#ccc" stroke="#fff" strokeWidth="1" /><path d="M-7 -5L1 -2L8 -6M1 -2V9" stroke="#888" strokeWidth="1" /></Hex>, <Hex key="2"><g transform="rotate(40)" stroke="#eee" strokeWidth="1"><path d="M-7 -5V6A7 4.500 0 0 0 7 6V-5Z" fill="#aaa" /><ellipse cy="-5" rx="7" ry="4.500" fill="#ddd" /></g></Hex>],
      [<Hex key="1"><path d="M0 -10V10M-10 0H10M-8 -8L8 8M8 -8L-8 8" stroke="#ddd" strokeWidth="1" /><path d="M-4 -4H4V4H-4ZM-8 -8H8V8H-8Z" strokeWidth="1" /></Hex>, <Hex key="2"><path d="M-8 9L-4 -8L7 -9L5 -1L8 9L0 5Z" fill="#ccc" strokeWidth="1" /><path d="M1 -8L0 5M-6 1L6 0" stroke="#888" strokeWidth="1" /></Hex>],
    ],
  },
  {
    name: "Primitive", w: 75, cols: [
      [<Hex key="1"><circle r="7.500" fill="#fff" stroke="none" /><path d="M5 -5A7 7 0 0 0 -5 5Z" fill="#222" stroke="none" /></Hex>, <Hex key="2"><text y="7" fontSize="20" {...num}>7</text></Hex>],
      [<Hex key="1"><text y="6.500" fontSize="19" {...num} style={serif} textLength="22" lengthAdjust="spacingAndGlyphs">0.1</text></Hex>, <Hex key="2"><text y="7.500" fontSize="23" {...num} style={serif}>A</text></Hex>],
    ],
  },
  {
    name: "Input", w: 169, plus: true, cols: [
      [<Tile key="1"><path d="M0 -8V0" strokeWidth="3.500" /><path d="M-5 -1H5L0 5Z" fill="#000" /><path d="M-11 8H11" stroke="#222" strokeWidth="2" /><path d="M-11 11H11" strokeDasharray="1.500 1.500" strokeWidth="4" stroke="#333" /></Tile>, <Tile key="2" f="#ffc72c"><path d="M-11 4L-7 -1L-8 9L0 -6L-2 8L6 -7L5 5L10 -8" stroke="#a86400" strokeWidth="2.600" /></Tile>],
      null,
      [<Tile key="1"><path d="M-6 -11H6V11H-6Z" fill="#111" /><path d="M-5 -10H5V-1H-5Z" fill="#ccc" stroke="none" /></Tile>, <I key="2"><circle r="14" fill="#888" stroke="#444" /><circle r="12" fill="none" stroke="#bbb" /><path d="M14 0L8 5A9 9 0 1 1 8 -5Z" fill="#222" /></I>],
      [<Tile key="1"><path d="M-4 -14L-6 -7H5M3 -14L1 -4" stroke="#555" strokeWidth="3" /><path d="M7 1H-3L-4 6C8 4 8 14 -5 12" stroke="#333" strokeWidth="3.500" /></Tile>, <Tile key="2"><path d="M-10 -9H10V-4H-10ZM-10 -1H10V4H-10ZM-10 7H10V11H-10Z" fill="#ddd" stroke="#333" strokeWidth="1.500" /></Tile>],
      null,
      [<Tile key="1" f="url(#pink)"><path d="M-14 5H14" stroke="#601040" strokeWidth="1" /><circle cx="6" cy="5" r="2.800" fill="#fff" strokeWidth="1.500" /><circle cx="-14" cy="5" r="2.800" fill="#fff" strokeWidth="1.500" /></Tile>, <Tile key="2" f="#4ac81e"><g stroke="none"><path d="M-14 -14H-7V-7H-14ZM7 -7H14V0H7Z" fill="#c8ff90" /><path d="M0 -14H7V-7H0Z" fill="#a0f020" /><path d="M-7 -7H0V0H-7ZM7 -14H14V-7H7Z" fill="#e8ffc0" /><path d="M-7 0H0V7H-7Z" fill="#004a00" /><path d="M-14 0H-7V14H-14Z" fill="#18b038" /><path d="M-7 7H0V14H-7ZM0 -7H7V0H0Z" fill="#108a10" /><path d="M7 7H14V14H7Z" fill="#60f8b8" /><path d="M0 0H7V7H0Z" fill="#90f010" /></g></Tile>],
    ],
  },
  {
    name: "Rhino", w: 87, plus: true, cols: [
      [<Hex key="1"><g strokeWidth=".6"><path d="M-9 -5L-5 6L1 10L9 5V-1L1 4Z" fill="#3a5cc0" /><path d="M-9 -6L-5 3L1 6L9 2V-4Z" fill="#eee" /><path d="M-9 -8L-6 -1L0 2L9 -2V-5L3 -7Z" fill="#f0593a" /></g></Hex>, <Hex key="2"><path d="M0 0C2 -2 4 2 1 4C-3 6 -6 1 -3 -3C1 -7 8 -3 7 3C5 9 -4 11 -8 5C-12 -2 -7 -10 1 -10" stroke="#c87818" strokeWidth="2" /></Hex>],
      null,
      [<Hex key="1"><path d="M-9 -11L12 6M-12 -6L8 11M-3 -12L13 2M-13 0L2 12M9 -11L-12 6M12 -6L-8 11M3 -12L-13 2M13 0L-2 12" stroke="#c08020" strokeWidth="1.700" /></Hex>, <Hex key="2"><path d="M-11 -7H11" stroke="#888" strokeWidth="3" /><path d="M-13 -2H13M-9 9H9" stroke="#fff" strokeDasharray="5 2" /><path d="M-14 3H14" stroke="#f0b020" strokeDasharray="4 2" /></Hex>],
    ],
  },
  {
    name: "Util", w: 134, plus: true, cols: [
      [<I key="1"><path d="M-7 5C-6 -4 -3 -8 2 -10C4 -4 5 2 6 8" stroke="#803020" strokeWidth="1.500" /><path d="M2 -11C-2 -14 -8 -12 -9 -6C-4 -5 1 -7 2 -11Z" fill="#5ab01c" stroke="#286008" strokeWidth="1" /><circle cx="-7" cy="6" r="6" fill="url(#cherry)" stroke="none" /><circle cx="6.500" cy="9" r="5.800" fill="url(#cherry)" stroke="none" /></I>, <Tile key="2"><path d="M-14 12H14" strokeWidth="4" /><path d="M0 12V0M0 3L-8 -4M0 2L8 -5M0 0L-3 -9M0 0L5 -10M-8 -4L-11 -3M-5 -2L-8 -9M5 -3L10 -9" strokeWidth="1.800" /><g fill="#222" stroke="none" opacity=".75"><circle cx="-8" cy="-5" r="3" /><circle cx="-3" cy="-9" r="3" /><circle cx="4" cy="-9" r="3" /><circle cx="9" cy="-5" r="3" /></g></Tile>],
      null,
      [<I key="1"><path d="M-13 -5H0V-10L13 0L0 10V5H-13Z" fill="#444" stroke="#222" /></I>, <I key="2"><path d="M-13 -5H0V-10L13 0L0 10V5H-13Z" fill="#eee" stroke="#666" strokeWidth="1.600" /></I>],
      null,
      [<I key="1"><ellipse cx="-3" cy="-3" rx="11" ry="7" transform="rotate(-45 -3 -3)" fill="#c4c4c4" stroke="#777" /><circle cx="-3" cy="-1" r="1.600" fill="#444" stroke="none" /><ellipse cx="5" cy="4" rx="9" ry="6.500" transform="rotate(-55 5 4)" fill="#e8488c" stroke="#901850" /><circle cx="4" cy="6" r="1.800" fill="#fff" stroke="none" /></I>, <I key="2"><path d="M-3 -13H3V-4L10 11Q10 14 7 14H-7Q-10 14 -10 11L-3 -4Z" fill="#fff" stroke="#906070" strokeWidth="1.200" /><path d="M-6 3H6L10 12Q9 13.500 7 13.500H-7Q-9 13.500 -10 12Z" fill="#d82a70" stroke="none" /></I>],
    ],
  },
];

/* ---------- Grasshopper window pieces ---------- */
const GhWin = styled(Win)`border: 1px solid #9a9a9a; border-bottom: 0; box-shadow: 0 0 6px rgba(0, 0, 0, .25);`;
const GhTitle = styled.div`height: 37px; flex: none; background: #fff; display: flex; justify-content: space-between; padding: 6px 23px 0 9px;`;
const GhMenu = styled.div`height: 36px; flex: none; display: flex; padding: 7px 12px 0 17px; background: linear-gradient(90deg, #f0f0f0, #d2ead4);`;
const FileName = styled(Label)`margin-left: auto;`;
const GhTabs = styled.div`height: 28px; flex: none; display: flex; align-items: stretch; background: #f0f0f0; padding-left: 1px;`;
const GhTabOn = styled.div`
  width: 75px;
  border: 1px solid #999;
  border-bottom: 0;
  border-radius: 8px 8px 0 0;
  background: linear-gradient(#fff 60%, #eee);
  padding: 1px 0 0 10px;
`;
const GhTabRest = styled.div`flex: 1; display: flex; padding: 4px 0 0 11px; border-bottom: 1px solid #999; white-space: nowrap; overflow: hidden;`;
const Ribbon = styled.div`height: 110px; flex: none; display: flex; gap: 4px; padding: 3px 0 0 4px; background: linear-gradient(#d6d6d6, #f0f0f0 85%); border-right: 2px solid #f0f0f0; border-top-right-radius: 8px; overflow: hidden;`;
const Group = styled.div`width: ${(p) => p.$w}px; height: 91px; flex: none; border: 1px solid #8a948c; border-radius: 6px; overflow: hidden; display: flex; flex-direction: column; background: linear-gradient(#d4d4d4, #f2f2f2);`;
const GroupBody = styled.div`display: flex; height: 72px; flex: none;`;
const GroupCol = styled.div`width: 35px; display: flex; flex-direction: column; align-items: center; padding-top: 2px; flex: none; gap: 3px;`;
const GroupSep = styled.i`width: 12px; flex: none; background: linear-gradient(#bbb, #bbb) center / 1px 60px no-repeat;`;
const GroupName = styled.div`
  position: relative;
  flex: 1;
  background: linear-gradient(#2c2c2c, #161616);
  color: #e4f0e4;
  font-size: 12.5px;
  line-height: 15px;
  text-align: center;
  padding-right: ${(p) => (p.$plus ? 14 : 0)}px;
`;
const Plus = styled.i`position: absolute; right: 4px; top: 4px; width: 8px; height: 8px; background: linear-gradient(#999, #999) center / 8px 2px no-repeat, linear-gradient(#999, #999) center / 2px 8px no-repeat;`;
const CanvasBar = styled.div`
  height: 39px;
  flex: none;
  display: flex;
  align-items: center;
  border-top: 2px solid #808080;
  padding-bottom: 2px;
  margin-right: 2px;
  background: linear-gradient(#d0ebd3, #edf2ed);
`;
const Tool = styled.div`width: ${(p) => p.$w}px; display: flex; justify-content: center; flex: none;`;
const ToolOn = styled(Tool)`height: 34px; align-items: center; border: 1px solid #0078d7; background: #dfeee6;`;
const VSep = styled.i`width: 2px; height: 27px; margin: 0 ${(p) => p.$m}px; background: #fff; border-left: 1px solid #aaa; flex: none;`;
const Combo = styled.div`width: 202px; height: 28px; margin-right: 4px; flex: none; background: #fff; border: 1px solid #7a7a7a; display: flex; align-items: center; justify-content: space-between; padding: 0 5px 0 3px;`;
const Push = styled.i`flex: 1;`;
const Canvas = styled.div`
  position: relative;
  isolation: isolate;
  flex: none;
  height: 744px;
  margin-right: 2px;
  border-left: 1px solid #777;
  overflow: hidden;
  background: #d4cfc8;
`;
const Wires = styled.svg`position: absolute; left: 0; top: 0; z-index: -2;`;
const Note = styled.article`
  position: absolute;
  left: ${(p) => p.$x - 1015}px;
  top: ${(p) => p.$y - 270}px;
  width: ${(p) => p.$w}px;
  height: ${(p) => p.$h}px;
  border: 1.5px solid #222;
  border-radius: 5px;
  background: ${(p) => (p.$red ? "#ff8585" : "#86fff9")};
  box-shadow: 0 1px 1px rgba(0, 0, 0, .35);
  ${(p) => !p.$bare && css`
    &::before, &::after {
      content: "";
      position: absolute;
      z-index: -1;
      top: calc(50% - 5.5px);
      width: 11px;
      height: 11px;
      border: 2px solid #000;
      border-radius: 50%;
      background: #fff;
    }
    &::before { left: -7px; }
    &::after { right: -7px; }
  `}
`;
const NoteHead = styled.div`
  height: 21px;
  border-bottom: 1.5px solid #222;
  border-top: 1px solid rgba(255, 255, 255, .7);
  border-radius: 4px 4px 0 0;
  background: ${(p) => (p.$red ? "#cd6a69" : "#6acdc8")};
  text-align: center;
  font-size: 12.5px;
  line-height: 18px;
  color: #111;
`;
const NoteBody = styled.div`
  padding: 9px 12px 0 0;
  height: calc(100% - 21px);
  border-radius: 0 0 4px 4px;
  background: linear-gradient(${(p) => (p.$red ? "#d87070, #ff8585" : "#6edcd7, #86fff9")} 12px);
  text-align: center;
  font-family: ${MONO};
  font-size: 17.15px;
  font-weight: 700;
  line-height: 19px;
  color: #000;
  white-space: pre;
`;
const Rows = styled.div`
  height: calc(100% - 21px);
  display: grid;
  grid-template: 20px 39px 1fr / 20px 1fr;
  background: linear-gradient(90deg, transparent 19px, rgba(0, 60, 60, .25) 19px, rgba(0, 60, 60, .25) 20px, transparent 20px), linear-gradient(#6edcd7, #86fff9 12px);
`;
const RowNo = styled.div`
  display: flex;
  align-items: center;
  justify-content: center;
  padding-bottom: 6px;
  font-size: 15.5px;
  line-height: 14px;
  font-weight: 500;
  background: ${(p) => (p.$alt ? "rgba(90, 160, 150, .14)" : "none")};
`;
const RowText = styled.div`
  padding-left: 3px;
  font-family: ${MONO};
  font-size: 17.15px;
  font-weight: 700;
  line-height: ${(p) => (p.$alt ? 19 : 17)}px;
  color: #000;
  white-space: pre;
  background: ${(p) => (p.$alt ? "rgba(90, 160, 150, .14)" : "none")};
`;
const Brep = styled(Note)`
  background: linear-gradient(#b9e88c, #6cc82c 50%, #48b008);
  text-align: center;
  font-size: 14.3px;
  line-height: 23px;
  letter-spacing: -.1px;
  color: #14380a;
  white-space: nowrap;
`;
const Compass = styled.svg`position: absolute; left: 800px; top: 675px;`;
const SliderStub = styled.div`position: absolute; left: 0; top: 709px; width: 9px; height: 35px; border: 1px solid #000; border-left: 0; background: linear-gradient(#eee, #aaa 32%, #777 34%, #999);`;
const GhStatus = styled.div`height: 16px; flex: none; border-top: 2px solid #fff; background: #f0f0f0; display: flex; justify-content: flex-end; padding: 4px 46px 0 0; overflow: hidden;`;

const Caret = ({ w = 16 }) => <Tool $w={w}><svg width="6" height="4"><path d="M0 0H6L3 3.500Z" /></svg></Tool>;
const Cyl = ({ f, s = "#222", hole }) => (
  <g transform="rotate(40)" stroke={s} strokeWidth="1.200">
    <path d="M-9.500 -6V7A9.500 6 0 0 0 9.500 7V-6Z" fill={f} />
    <ellipse cy="-6" rx="9.500" ry="6" fill={hole || f} />
    <ellipse cy="-6" rx="5.500" ry="3.300" fill="none" />
  </g>
);
const vLines = [1136.5, 1323.5, 1511.5, 1698.5, 1886.5];
const hLines = [317.5, 379.5, 442.5, 504.5, 567.5, 629.5, 692.5, 754.5, 817.5, 879.5, 942.5, 1004.5];

const Grasshopper = () => (
  <GhWin $x={1013} $y={19} $w={884} $h={1011} $bg="#f0f0f0">
    <GhTitle>
      <Label $color="#999" $ls={-0.25}>Grasshopper - CellPhoneStand_Simple_2024*</Label>
      <svg width="130" height="24" viewBox="1743 26 130 24" fill="none" stroke="#888" strokeWidth="1.200"><path d="M1743 37.500H1755M1801.500 32.500H1812.500V43.500H1801.500ZM1860.500 32L1872 43.500M1872 32L1860.500 43.500" /></svg>
    </GhTitle>
    <GhMenu>
      {[["File", 48], ["Edit", 51], ["View", 58], ["Display", 75], ["Solution", 84], ["Help", 40]].map(([t, w]) => <Label key={t} $w={w} $color="#000" $ls={-0.25}>{t}</Label>)}
      <FileName $color="#000" $ls={-0.27}>CellPhoneStand_Simple_2024*</FileName>
    </GhMenu>
    <GhTabs>
      <GhTabOn><Label $color="#000" $size={15.5} $ls={-0.5}>Params</Label></GhTabOn>
      <GhTabRest>
        {[["Maths", 65], ["Sets", 51], ["Vector", 70], ["Curve", 63], ["Surface", 75], ["Mesh", 60], ["Intersect", 85], ["Transform", 96], ["Display", 74], ["Rhino", 64], ["Kangaroo2", 85]].map(([t, w]) => <Label key={t} $w={w} $color="#666" $ls={-0.35}>{t}</Label>)}
      </GhTabRest>
    </GhTabs>
    <Ribbon>
      {groups.map((g) => (
        <Group key={g.name} $w={g.w}>
          <GroupBody>{g.cols.map((c, i) => (c ? <GroupCol key={i}>{c}</GroupCol> : <GroupSep key={i} />))}</GroupBody>
          <GroupName $plus={g.plus}>{g.name}{g.plus && <Plus />}</GroupName>
        </Group>
      ))}
    </Ribbon>
    <CanvasBar>
      <Tool $w={37}><I><path d="M-10 -12H4L9 -6V4H-10Z" fill="#ddd" stroke="#888" /><path d="M-13 0H-4L-1 -4H11V13H-13Z" fill="url(#folder)" stroke="#2c7a10" /></I></Tool>
      <Tool $w={37}><I><path d="M-13 -13H13V13H-10L-13 10Z" fill="url(#floppy)" stroke="#123078" /><path d="M-8 -12H8V-2H-8Z" fill="#e8eef8" stroke="none" /><path d="M-6 -9H6M-6 -5H6" stroke="#aab" strokeWidth="1" /><path d="M-6 4H7V13H-6Z" fill="#ccc" stroke="none" /><path d="M-3 6H1V12H-3Z" fill="#2456c0" stroke="none" /></I></Tool>
      <VSep $m={3} />
      <Combo><Label $ls={-0.5} $color="#000">125%</Label><svg width="10" height="6" fill="none" stroke="#444"><path d="M.5 .5L5 5L9.500 .5" /></svg></Combo>
      <Tool $w={31}><I><path d="M-12.500 -6V-12.500H-5M5 -12.500H12.500V-6M12.500 6V12.500H5M-5 12.500H-12.500V6" strokeWidth="4.500" stroke="#111" /><path d="M-3 -3L3 3M3 -3L-3 3" strokeWidth="2.500" /></I></Tool>
      <Caret w={18} />
      <Tool $w={34}><I><path d="M-13 0C-7 -10 7 -10 13 0C7 9 -7 9 -13 0Z" fill="#eef6fc" strokeWidth="1.600" stroke="#333" /><circle r="6.500" fill="#4ab4e8" stroke="#124" /><circle r="2.800" fill="#000" /><circle cx="-2" cy="-2.500" r="1.500" fill="#fff" stroke="none" /></I></Tool>
      <Caret w={17} />
      <Tool $w={32}><I><path d="M13 -11L1 0L-4 12L8 8L14 -1Z" fill="#e83030" stroke="#a01010" /><path d="M1 0L-4 12L8 8C6 4 4 2 1 0Z" fill="#e8b860" stroke="none" /><path d="M-10 -3C-15 0 -13 5 -11 7C-9 12 -6 13 -3 12" strokeWidth="1.600" stroke="#431" /></I></Tool>
      <Push />
      <Tool $w={35}><I><g transform="translate(0 -4) scale(.75)"><Cyl f="url(#ball)" s="#888" /></g><path d="M-11 7Q-5 3 0 3T11 7Q6 13 0 13T-11 7Z" fill="#333" stroke="none" /></I></Tool>
      <Tool $w={36}><I><Cyl f="#eaf0ea" s="#444" /><g transform="rotate(40)"><ellipse cy="6" rx="7" ry="4.500" stroke="#444" strokeWidth="1" /></g></I></Tool>
      <ToolOn $w={34}><I s={30}><Cyl f="url(#cyl)" s="#5c0800" hole="#c83020" /></I></ToolOn>
      <VSep $m={8} />
      <Tool $w={36}><I><path d="M-13 -12C-4 -6 -10 8 -2 12L10 13" strokeWidth="1.400" /><g transform="translate(2 -1) scale(.85)"><Cyl f="url(#teal)" s="#044" /></g></I></Tool>
      <Tool $w={31}><I><Cyl f="url(#green)" s="#342" /><path d="M-12 -2L-14 4Q-12 12 -4 13L3 10Z" fill="#eee" stroke="#777" /><path d="M-14 -8L9 12" /></I></Tool>
      <Tool $w={36}><I><circle r="12.500" fill="url(#ball)" stroke="#555" /><path d="M0 -12.500A12.500 12.500 0 0 0 0 12.500Z" fill="#f09020" stroke="#a05000" /></I></Tool>
      <VSep $m={3} />
      <Tool $w={28}><I s={28}><path d="M-5 -11L6 -10L11 -1L8 9L-3 11L-11 5L-11 -5Z" fill="#6ab8f0" stroke="#1c4070" strokeWidth="1.500" /><path d="M-4 -6L4 -6L7 0L3 6L-4 6L-7 0Z" fill="#9ad4fa" stroke="none" /></I></Tool>
      <Caret w={12} />
    </CanvasBar>
    <Canvas>
      <Wires width="880" height="744" viewBox="1015 270 880 744" fill="none">
        <path d={vLines.map((x) => `M${x} 270V1014`).join("") + hLines.map((y) => `M1015 ${y}H1895`).join("")} stroke="#bcb9b2" />
        <path d="M1015 671C1100 668 1200 667 1330 666.500" stroke="#7fd636" strokeWidth="4" />
      </Wires>
      <Note $x={1065} $y={408} $w={657} $h={81}><NoteHead>notes</NoteHead><NoteBody>{"To see the phone in the stand, enable the phone view in the\nphone model."}</NoteBody></Note>
      <Note $x={1064} $y={537} $w={659} $h={81}><NoteHead>notes</NoteHead><NoteBody>{"Inspect the solution. If it seems viable, bake it to the layer\nof your choosing (default?) and print it out."}</NoteBody></Note>
      <Brep $x={1332} $y={653} $w={111} $h={26}>Brep BAKE ME</Brep>
      <Note $x={1065} $y={712} $w={667} $h={114}>
        <NoteHead>notes</NoteHead>
        <Rows>
          <RowNo>0</RowNo><RowText>Do the walls seem too thin?</RowText>
          <RowNo $alt>1</RowNo><RowText $alt>{"Does it look stable (is the center of gravity for the phone\nover the base)?"}</RowText>
        </Rows>
      </Note>
      <Note $red $x={1067} $y={855} $w={660} $h={81}><NoteHead $red>notes</NoteHead><NoteBody $red>{"Can we remove a cylinder from the volume to reduce the volume\nwe need to print?"}</NoteBody></Note>
      <Note $red $bare $x={1070} $y={972} $w={656} $h={81}><NoteHead $red>notes</NoteHead><NoteBody $red /></Note>
      <SliderStub />
      <Compass width="76" height="69" viewBox="1816 945 76 69" fill="none">
        <path d="M1833 990C1830 972 1838 955 1856 951" stroke="#000" strokeWidth="5" strokeDasharray="16 1 9 1" />
        <path d="M1818 973.500L1824 968L1830 973L1825 979Z" fill="#000" />
        <circle cx="1847" cy="953" r="3" fill="#000" /><circle cx="1857" cy="951" r="3" fill="#000" />
        <circle cx="1857.500" cy="977.500" r="24.500" fill="url(#compass)" stroke="#222" strokeWidth="1.300" />
        <circle cx="1857.500" cy="977.500" r="23" stroke="#fff" strokeWidth="1.600" />
        <path d="M1857 954H1864L1860 962ZM1881 977V984L1874 980ZM1852 1001H1859L1855 993ZM1834 972V979L1842 975Z" fill="#fff" />
      </Compass>
    </Canvas>
    <GhStatus><Label $ls={-0.3} $color="#777">1.0.0008</Label></GhStatus>
  </GhWin>
);

/* ---------- taskbar and floating badge ---------- */
const Taskbar = styled.div`
  position: absolute;
  left: 0;
  bottom: 0;
  width: 1920px;
  height: 9px;
  overflow: hidden;
  display: flex;
  background: linear-gradient(90deg, #3a3029, #30291f 20%, #3c3028 40%, #3b3231 55%, #2a2a24 65%, #2b3020 80%, #353436);
`;
const TaskActive = styled.i`width: 61px; margin-left: 930px; background: #5f5957;`;
const Clock = styled.span`margin-left: 753px; padding-top: 4px; font-size: 15px; line-height: 18px; color: #fff;`;
const Badge = styled.div`
  position: absolute;
  left: 1871px;
  top: 136px;
  width: 60px;
  height: 49px;
  border-radius: 25px;
  border: 4px solid #d5cdf4;
  border-bottom-color: #c3b6f2;
  background: #f2effd;
  display: flex;
  align-items: center;
  padding-left: 8px;
`;

export default function App() {
  return (
    <Desktop>
      <Global />
      <Defs />
      <BackRhino />
      <DocWindow />
      <BrowserWindow />
      <RhinoWindow />
      <Grasshopper />
      <Taskbar><TaskActive /><Clock>9:54</Clock></Taskbar>
      <Badge>
        <svg width="30" height="30" viewBox="0 0 30 30"><rect x="2" y="3" width="17" height="19" rx="3" fill="#8f7cf4" transform="rotate(-12 10 12)" /><path d="M11 8H25Q27 8 27 10V27L19 23L9 26V10Q9 8 11 8Z" fill="#b7a9fb" /><path d="M13 14H22M13 18H18" stroke="#fff" strokeWidth="1.800" /></svg>
      </Badge>
    </Desktop>
  );
}
